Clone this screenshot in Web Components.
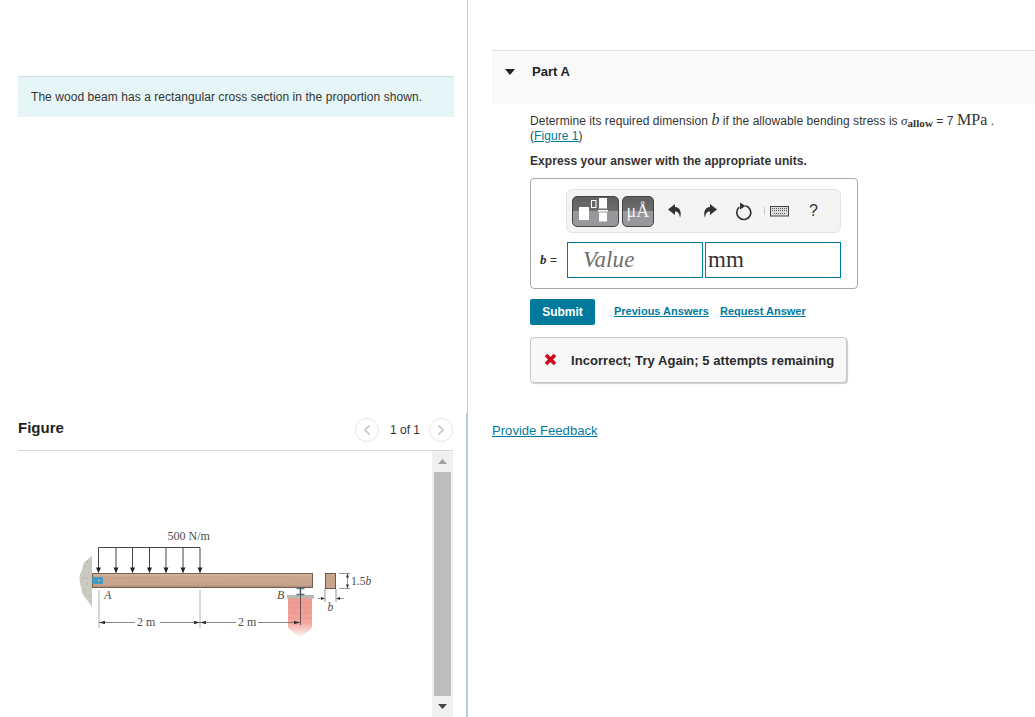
<!DOCTYPE html>
<html>
<head>
<meta charset="utf-8">
<title>Part A</title>
<style>
  html, body { margin: 0; padding: 0; height: 100%; overflow: hidden; background: #fff; }
  body { font-family: "Liberation Sans", Arial, sans-serif; color: #222; }
</style>
</head>
<body>
<problem-page>
  <intro-text slot="left">The wood beam has a rectangular cross section in the proportion shown.</intro-text>
  <figure-panel slot="left"></figure-panel>
  <part-panel slot="right"></part-panel>
</problem-page>

<script>
// layout general: two columns and the divider between them
class ProblemPage extends HTMLElement {
  constructor() {
    super();
    this.attachShadow({ mode: 'open' });
    this.shadowRoot.innerHTML = `
      <style>
        :host { display: flex; width: 1035px; height: 717px; overflow: hidden; }
        .left { width: 466px; flex: none; padding: 76px 13px 0 18px; box-sizing: border-box; display: flex; flex-direction: column; }
        .divider { width: 2px; flex: none; background:
          linear-gradient(#c5cfdd, #c5cfdd) 1px 0 / 1px 413px no-repeat,
          linear-gradient(#b5cbe2, #b5cbe2) 0 413px / 2px 100% no-repeat; }
        .right { flex: 1; padding: 50px 0 0 24px; min-width: 0; }
      </style>
      <div class="left"><slot name="left"></slot></div>
      <div class="divider"></div>
      <div class="right"><slot name="right"></slot></div>
    `;
  }
}
customElements.define('problem-page', ProblemPage);

class IntroText extends HTMLElement {
  constructor() {
    super();
    this.attachShadow({ mode: 'open' });
    this.shadowRoot.innerHTML = `
      <style>
        :host { display: block; height: 41px; box-sizing: border-box; background: #e6f5f6; border-top: 1px solid #d5dedf;
          margin-right: -1px; padding: 13px 13px 0; font-size: 12px; letter-spacing: .06px; line-height: 14px; color: #333; }
      </style>
      <slot></slot>
    `;
  }
}
customElements.define('intro-text', IntroText);

class FigurePanel extends HTMLElement {
  constructor() {
    super();
    this.attachShadow({ mode: 'open' });
    this.shadowRoot.innerHTML = `
      <style>
        :host { display: block; margin-top: 297px; }
        .head { display: flex; align-items: center; height: 37px; box-sizing: border-box; padding-bottom: 9px; border-bottom: 1px solid #d6d6d6; }
        .title { font-size: 15px; font-weight: bold; color: #1f1f1f; flex: 1; }
        .count { font-size: 12px; color: #333; margin: 5px 9px 0 11px; }
        .round { width: 24px; height: 24px; margin-top: 4px; box-sizing: border-box; border: 1px solid #e4e4e4; border-radius: 50%; display: flex; align-items: center; justify-content: center; }
        .round.prev { margin-left: 1px; }
        .body { display: flex; height: 266px; }
        .drawing { flex: 1; position: relative; }
        .drawing svg { position: absolute; left: 42px; top: 73px; }
        .bar { width: 21px; background: #f0f0f0; display: flex; flex-direction: column; align-items: center; margin-left: auto; }
        .cap { height: 21px; flex: none; display: flex; align-items: center; justify-content: center; }
        .thumb { width: 17px; flex: 1; background: #bdbdbd; }
      </style>
      <div class="head">
        <span class="title">Figure</span>
        <span class="round prev"><svg width="8" height="12" viewBox="0 0 8 12"><path d="M6.500 1.500 2 6l4.500 4.500" fill="none" stroke="#c3c3c3" stroke-width="1.600"/></svg></span>
        <span class="count">1 of 1</span>
        <span class="round"><svg width="8" height="12" viewBox="0 0 8 12"><path d="M1.500 1.500 6 6l-4.500 4.500" fill="none" stroke="#c3c3c3" stroke-width="1.600"/></svg></span>
      </div>
      <div class="body">
        <div class="drawing">
          <svg width="320" height="140" viewBox="60 524 320 140">
            <defs>
              <linearGradient id="wood" x1="0" y1="0" x2="0" y2="1">
                <stop offset="0" stop-color="#d8bca8"/><stop offset=".2" stop-color="#cba78f"/><stop offset=".8" stop-color="#c9a48c"/><stop offset="1" stop-color="#a98771"/>
              </linearGradient>
              <linearGradient id="brick" x1="0" y1="0" x2="0" y2="1">
                <stop offset="0" stop-color="#ef9b92"/><stop offset=".62" stop-color="#f3a69d"/><stop offset="1" stop-color="#fff"/>
              </linearGradient>
              <filter id="soft" x="-5%" y="-5%" width="110%" height="110%"><feGaussianBlur stdDeviation=".35"/></filter>
            </defs>
            <g filter="url(#soft)">
              <path d="M92 555c-3 4-6 5-8 8-2 4-1 6-3 9-2 4-2 7-1 10 0 4 2 6 2 10 1 4 3 5 5 8 2 2 3 5 5 7z" fill="#cbcac0"/>
              <path d="M85 566h1M88 572h1M83 578h1M87 584h1M84 590h1M89 596h1M87 562h1M86 578h1" stroke="#99988d" stroke-width="1"/>
              <path d="M98.500 547.500h101.500M98.500 547.500v25M116 547.500v25M132.500 547.500v25M149.500 547.500v25M166 547.500v25M183 547.500v25M200 547.500v25" stroke="#444" stroke-width="1" fill="none"/>
              <path d="M96 567.500l2.500 5.500 2.500-5.500zM113.500 567.500l2.500 5.500 2.500-5.500zM130 567.500l2.500 5.500 2.500-5.500zM147 567.500l2.500 5.500 2.500-5.500zM163.500 567.500l2.500 5.500 2.500-5.500zM180.500 567.500l2.500 5.500 2.500-5.500zM197.500 567.500l2.500 5.500 2.500-5.500z" fill="#222"/>
              <rect x="92.500" y="573.500" width="220" height="14" fill="url(#wood)" stroke="#75604f" stroke-width="1"/>
              <path d="M110 578h50M170 583h60M240 577h50M130 582h30" stroke="#bd9880" stroke-width=".6"/>
              <rect x="92.500" y="577" width="10.500" height="7" fill="#3f9fc6"/>
              <circle cx="99" cy="580.500" r="1.600" fill="#9bc7cf" stroke="#456" stroke-width=".5"/>
              <path d="M288 598h24v30l-12 10-12-10z" fill="url(#brick)"/>
              <path d="M288 603h24M288 608h24M288 613h24M288 618h24M294 598v5M300 603v5M306 598v5M294 608v5M306 608v5M300 613v5" stroke="#e98a80" stroke-width=".6"/>
              <rect x="287" y="595" width="27" height="3.500" fill="#b9b9b4"/>
              <path d="M296.500 588.500h8M300.500 589v6M296.500 594.500h8" stroke="#4b7a8c" stroke-width="1.500"/>
              <path d="M300.500 587v38" stroke="#444" stroke-width=".8"/>
              <path d="M99 590v38M200 590v38" stroke="#999" stroke-width=".8"/>
              <path d="M99 622.500h36M160 622.500h40M200 622.500h36M258 622.500h42" stroke="#666" stroke-width=".8"/>
              <path d="M99 622.500l6-1.700v3.400zM200 622.500l-6-1.700v3.400zM200 622.500l6-1.700v3.400zM300 622.500l-6-1.700v3.400z" fill="#333"/>
              <rect x="325.500" y="573.500" width="10" height="15" fill="#c9a48d" stroke="#6d5a4d"/>
              <path d="M339 573.500h11M339 588.500h11M347.500 574v14M325 589v13M336 589v13M318 598.500h6M337 598.500h7" stroke="#666" stroke-width=".7" fill="none"/>
              <path d="M347.500 573.500l-1.500 4h3zM347.500 588.500l-1.500-4h3zM325 598.500l-4-1.500v3zM336 598.500l4-1.500v3z" fill="#333"/>
            </g>
            <g font-family="Liberation Serif, serif" fill="#4d4d4d">
              <text x="167.500" y="540" font-size="12">500 N/m</text>
              <text x="104" y="599" font-size="12" font-style="italic">A</text>
              <text x="277" y="599" font-size="12" font-style="italic">B</text>
              <text x="137" y="626" font-size="12">2 m</text>
              <text x="238" y="626" font-size="12">2 m</text>
              <text x="351" y="585" font-size="11.500">1.5<tspan font-style="italic">b</tspan></text>
              <text x="327.500" y="611" font-size="11.500" font-style="italic">b</text>
            </g>
          </svg>
        </div>
        <div class="bar">
          <div class="cap"><svg width="9" height="5"><path d="M4.500 0 9 5H0z" fill="#a0a0a0"/></svg></div>
          <div class="thumb"></div>
          <div class="cap"><svg width="9" height="5"><path d="M0 0h9L4.500 5z" fill="#444"/></svg></div>
        </div>
      </div>
    `;
  }
}
customElements.define('figure-panel', FigurePanel);

// toolbar of the answer box, the icons are drawn by hand
class AnswerBox extends HTMLElement {
  constructor() {
    super();
    this.attachShadow({ mode: 'open' });
    this.shadowRoot.innerHTML = `
      <style>
        :host { display: block; width: 328px; height: 111px; box-sizing: border-box; border: 1px solid #a9a9a9; border-radius: 4px; background: #fff; padding: 10px 16px 0 9px; }
        .tools { margin-left: 26px; height: 44px; box-sizing: border-box; background: #f4f4f4; border: 1px solid #e3e3e3; border-radius: 6px; display: flex; align-items: center; padding-left: 5px; }
        .tbtn { height: 31px; box-sizing: border-box; border: 1px solid #444; border-radius: 5px; background: linear-gradient(#5f5f5f, #6e6e6e 50%, #98989c 50%); display: flex; align-items: center; justify-content: center; }
        .tbtn.a { width: 47px; margin-right: 3px; }
        .tbtn.b { width: 32px; color: #f2f2f2; font: 18px "Liberation Serif", serif; }
        .ico { display: flex; align-items: center; justify-content: center; }
        .q { font-size: 16px; color: #333; margin-left: 20px; }
        .row { display: flex; align-items: center; margin-top: 9px; }
        .lab { width: 27px; font: 12px "Liberation Sans", sans-serif; color: #333; flex: none; }
        .lab i { font: italic bold 13px "Liberation Serif", serif; }
        .field { width: 136px; height: 36px; box-sizing: border-box; border: 1px solid #007a9c; font: 23px "Liberation Serif", serif; display: flex; align-items: center; }
        .value { padding-left: 15px; color: #6e6e6e; font-style: italic; margin-right: 2px; }
        .unit { padding-left: 2px; color: #333; }
      </style>
      <div class="tools">
        <span class="tbtn a">
          <svg width="45" height="29" viewBox="0 0 45 29">
            <rect x="6" y="10" width="10" height="13" fill="#fff"/>
            <rect x="18.500" y="3.500" width="4.500" height="7" fill="none" stroke="#fff"/>
            <rect x="26" y="1" width="8" height="10.500" fill="#fff"/>
            <rect x="25" y="13" width="10" height="1.500" fill="#fff"/>
            <rect x="26" y="15.500" width="8" height="9" fill="#fff"/>
          </svg>
        </span>
        <span class="tbtn b">μÅ</span>
        <span class="ico" style="margin-left:13px"><svg width="16" height="16" viewBox="0 0 16 16"><path d="M8 1 1 6.500 8 12V8.500c3 0 4.500 1.500 5 6.500 2-6 0-10.500-5-11z" fill="#333"/></svg></span>
        <span class="ico" style="margin-left:19px"><svg width="16" height="16" viewBox="0 0 16 16"><path d="M8 1l7 5.500L8 12V8.500c-3 0-4.500 1.500-5 6.500-2-6 0-10.500 5-11z" fill="#333"/></svg></span>
        <span class="ico" style="margin-left:17px"><svg width="18" height="19" viewBox="0 0 18 19"><path d="M10.500 3.700A7 7 0 1 1 4.200 5.200" fill="none" stroke="#333" stroke-width="1.700"/><path d="M5 .5v7L10.500 4z" fill="#333"/></svg></span>
        <span class="ico" style="margin-left:10px"><svg width="26" height="12" viewBox="0 0 26 12"><path d="M1.500 2v8" stroke="#ccc"/><rect x="7.500" y="1.500" width="18" height="9.500" fill="#ddd" stroke="#444"/><path d="M9 3.500h15M9 5.500h15M11 8.500h11" stroke="#555" stroke-dasharray="1 1" fill="none"/></svg></span>
        <span class="q">?</span>
      </div>
      <div class="row">
        <span class="lab"><i>b</i> =</span>
        <span class="field value">Value</span>
        <span class="field unit">mm</span>
      </div>
    `;
  }
}
customElements.define('answer-box', AnswerBox);

class PartPanel extends HTMLElement {
  constructor() {
    super();
    this.attachShadow({ mode: 'open' });
    this.shadowRoot.innerHTML = `
      <style>
        :host { display: block; font-size: 12px; letter-spacing: .06px; color: #333; }
        .header { height: 54px; box-sizing: border-box; background: #f9f9f9; border-top: 1px solid #dedede; padding: 14px 0 0 13px; display: flex; }
        .header svg { margin-top: 4px; }
        .header b { font-weight: bold; font-size: 13px; letter-spacing: 0; color: #222; margin-left: 17px; line-height: 14px; }
        .content { padding: 8px 0 0 38px; }
        p { margin: 0; line-height: 15px; }
        .math { font-family: "Liberation Serif", serif; }
        .math.big { font-size: 16px; line-height: 15px; }
        .math.var { font-size: 16px; line-height: 15px; }
        .sigma { font: italic 13px/15px "Liberation Serif", serif; }
        .sigma sub { font: bold 11px/10px "Liberation Serif", serif; vertical-align: -2px; }
        a { color: #007a9c; text-decoration: underline; }
        .hint { font-weight: bold; margin-top: 10px; margin-bottom: 9px; line-height: 15px; }
        .actions { display: flex; align-items: center; margin-top: 10px; }
        .submit { width: 65px; height: 26px; background: #007a9c; color: #fff; font-weight: bold; font-size: 12px; letter-spacing: 0; border-radius: 2px; display: flex; align-items: center; justify-content: center; }
        .actions a { font-weight: bold; font-size: 11px; letter-spacing: 0; margin-top: -2px; }
        .actions a.first { margin-left: 19px; margin-right: 11px; }
        .result { width: 317px; height: 46px; box-sizing: border-box; margin-top: 12px; background: #f8f8f8; border: 1px solid #c8c8c8; border-radius: 4px; box-shadow: 1px 1px 1px #ccc; display: flex; align-items: center; padding: 1px 0 0 13px; font-weight: bold; font-size: 13px; letter-spacing: .05px; color: #2a2a2a; }
        .result svg { margin-right: 14px; margin-top: -2px; }
        .feedback { display: block; font-size: 13.100px; letter-spacing: 0; margin-top: 40px; line-height: 16px; }
      </style>
      <div class="header">
        <svg width="10" height="6" viewBox="0 0 10 6"><path d="M0 0h10L5 6z" fill="#222"/></svg>
        <b>Part A</b>
      </div>
      <div class="content">
        <p>Determine its required dimension <span class="math var"><i>b</i></span> if the allowable bending stress is <span class="sigma">σ<sub>allow</sub></span> = 7 <span class="math big">MPa</span> .<br>(<a>Figure 1</a>)</p>
        <div class="hint">Express your answer with the appropriate units.</div>
        <answer-box></answer-box>
        <div class="actions">
          <span class="submit">Submit</span>
          <a class="first">Previous Answers</a>
          <a>Request Answer</a>
        </div>
        <div class="result">
          <svg width="13" height="13" viewBox="0 0 13 13"><path d="M2 2l9 9M11 2l-9 9" stroke="#d0021b" stroke-width="3.600"/></svg>
          Incorrect; Try Again; 5 attempts remaining
        </div>
      </div>
      <a class="feedback">Provide Feedback</a>
    `;
  }
}
customElements.define('part-panel', PartPanel);
</script>
</body>
</html>
